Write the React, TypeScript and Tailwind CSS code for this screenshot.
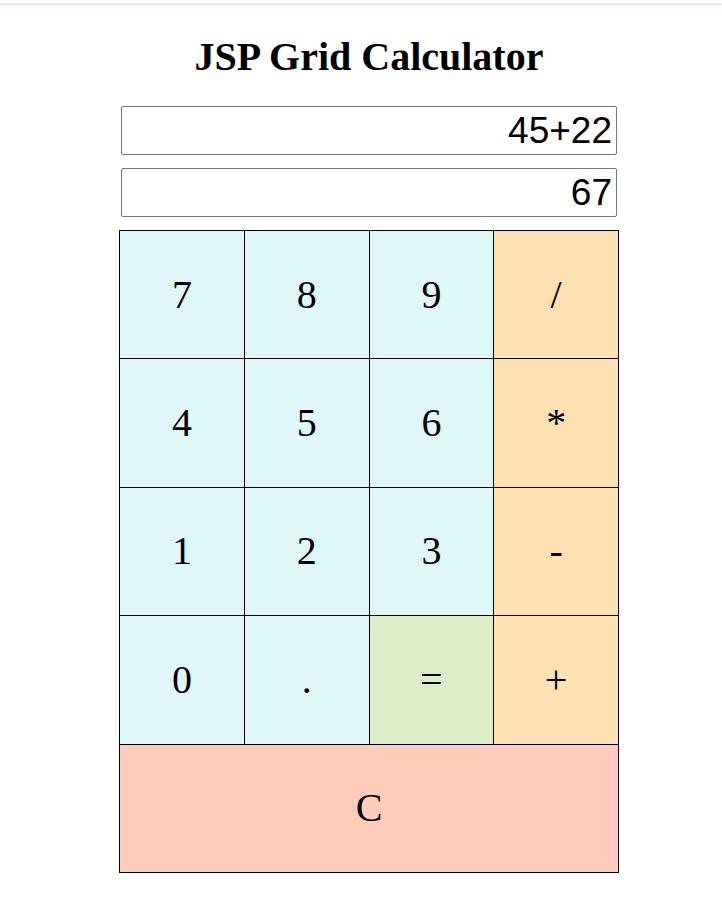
import React from 'react';

const keys = [
  { label: '7', color: 'bg-[#e0f7fa]' },
  { label: '8', color: 'bg-[#e0f7fa]' },
  { label: '9', color: 'bg-[#e0f7fa]' },
  { label: '/', color: 'bg-[#ffe0b2]' },
  { label: '4', color: 'bg-[#e0f7fa]' },
  { label: '5', color: 'bg-[#e0f7fa]' },
  { label: '6', color: 'bg-[#e0f7fa]' },
  { label: '*', color: 'bg-[#ffe0b2]' },
  { label: '1', color: 'bg-[#e0f7fa]' },
  { label: '2', color: 'bg-[#e0f7fa]' },
  { label: '3', color: 'bg-[#e0f7fa]' },
  { label: '-', color: 'bg-[#ffe0b2]' },
  { label: '0', color: 'bg-[#e0f7fa]' },
  { label: '.', color: 'bg-[#e0f7fa]' },
  { label: '=', color: 'bg-[#dcedc8]' },
  { label: '+', color: 'bg-[#ffe0b2]' },
];

export default function App() {
  return (
    <div className="min-h-[905px] bg-white pt-[3px] font-['Liberation_Serif',serif] text-black">
      <div className="h-[2px] bg-gradient-to-b from-[#fdeee8] to-[#f9dcd0]" />
      <div className="flex justify-center pl-4">
        <div className="flex w-[500px] flex-col items-center">
          <h1 className="mt-[30px] text-[40px] font-bold leading-[44px]">JSP Grid Calculator</h1>

          <input
            readOnly
            value="45+22"
            className="mt-[27px] h-[49px] w-[496px] rounded-[2px] border border-[#767676] pr-[4px] text-right font-['Liberation_Sans',Arial,sans-serif] text-[37px] outline-none"
          />
          <input
            readOnly
            value="67"
            className="mt-[13px] h-[49px] w-[496px] rounded-[2px] border border-[#767676] pr-[4px] text-right font-['Liberation_Sans',Arial,sans-serif] text-[37px] outline-none"
          />

          <div className="mt-[13px] grid h-[643px] w-[500px] grid-cols-4 grid-rows-5 gap-px border border-black bg-black">
            {keys.map((k) => (
              <button
                key={k.label}
                className={`${k.color} flex items-center justify-center text-[40px] font-normal`}
              >
                {k.label}
              </button>
            ))}
            <button className="col-span-4 flex items-center justify-center bg-[#ffccbc] text-[40px]">
              C
            </button>
          </div>
        </div>
      </div>
    </div>
  );
}
